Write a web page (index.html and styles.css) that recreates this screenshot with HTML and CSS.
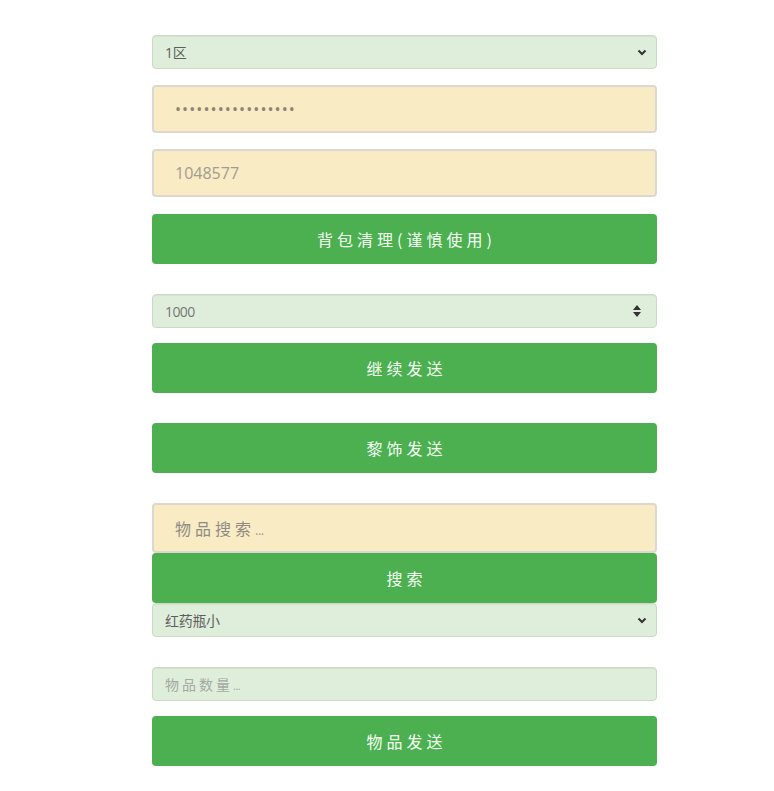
FILE: index.html
```html
<!DOCTYPE html>
<html lang="zh">
<head>
<meta charset="utf-8">
<title>工具</title>
<link rel="stylesheet" href="styles.css">
</head>
<body>
<div class="panel">
  <div class="field field-green sel gap16">
    <span class="sel-text">1区</span>
    <svg class="chev" width="10" height="8" viewBox="0 0 10 8"><path d="M1.5 2.5 L5 6 L8.5 2.5" fill="none" stroke="#333" stroke-width="2"/></svg>
  </div>
  <div class="field field-yellow gap16">
    <span class="pw">•••••••••••••••••</span>
  </div>
  <div class="field field-yellow gap17">
    <span class="ph-big">1048577</span>
  </div>
  <div class="btn gap30">背包清理(谨慎使用)</div>

  <div class="field field-green sel gap15">
    <span class="sel-text light">1000</span>
    <svg class="spin" width="10" height="14" viewBox="0 0 10 14"><path d="M5 1 L9 6 L1 6 Z M5 13 L9 8 L1 8 Z" fill="#333"/></svg>
  </div>
  <div class="btn gap30">继续发送</div>

  <div class="btn gap30">黎饰发送</div>

  <div class="field field-yellow search">
    <span class="ph-big spaced">物品搜索</span><span class="ph-big dots">...</span>
  </div>
  <div class="btn">搜索</div>
  <div class="field field-green sel gap30">
    <span class="sel-text">红药瓶小</span>
    <svg class="chev" width="10" height="8" viewBox="0 0 10 8"><path d="M1.5 2.5 L5 6 L8.5 2.5" fill="none" stroke="#333" stroke-width="2"/></svg>
  </div>

  <div class="field field-green gap15">
    <span class="ph-small">物品数量</span><span class="ph-small dots">...</span>
  </div>
  <div class="btn">物品发送</div>
</div>
</body>
</html>
```

FILE: styles.css
```css
html, body {
  margin: 0;
  padding: 0;
  background: #ffffff;
}
body {
  font-family: "Open Sans", "Noto Sans CJK SC", sans-serif;
}
.panel {
  width: 505px;
  margin-left: 152px;
  padding-top: 35px;
  display: flex;
  flex-direction: column;
}
.field {
  box-sizing: border-box;
  display: flex;
  align-items: center;
  border-radius: 4px;
}
.field-green {
  background: #dfeedb;
  border: 1px solid #c9dbc5;
  height: 34px;
  padding: 0 8px 0 12px;
  box-shadow: inset 0 1px 1px rgba(0,0,0,0.05);
}
.field-yellow {
  background: #f9ebc4;
  border: 2px solid #dcd8d0;
  height: 48px;
  padding: 0 21px;
}
.sel {
  justify-content: space-between;
}
.sel-text {
  font-size: 14px;
  color: #5e5e5e;
  font-family: "Open Sans", "Noto Sans CJK SC", sans-serif;
  letter-spacing: -0.3px;
}
.light {
  color: #777;
  letter-spacing: -0.6px;
}
.chev { margin-right: 1px; }
.spin { margin-right: 6px; }
.pw {
  font-size: 16px;
  color: #8a8574;
  letter-spacing: 1.1px;
}
.ph-big {
  font-size: 16px;
  color: #a09c92;
  font-family: "Open Sans", "Noto Sans CJK SC", sans-serif;
}
.spaced {
  letter-spacing: 4px;
  color: #8f8b83;
}
.dots {
  letter-spacing: -0.5px;
  font-size: 13px;
  margin-top: 3px;
}
.ph-small {
  font-size: 14px;
  color: #a3a9a0;
  letter-spacing: 3px;
}
.ph-small.dots {
  letter-spacing: -0.5px;
  font-size: 11px;
  margin-top: 3px;
}
.btn {
  box-sizing: border-box;
  height: 50px;
  background: #4caf50;
  color: #f4fff4;
  border-radius: 4px;
  display: flex;
  align-items: center;
  justify-content: center;
  font-size: 16px;
  letter-spacing: 4px;
  padding-left: 4px;
  font-family: "Noto Sans CJK SC", sans-serif;
}
.search { height: 50px; }
.gap15 { margin-bottom: 15px; }
.gap16 { margin-bottom: 16px; }
.gap17 { margin-bottom: 17px; }
.gap30 { margin-bottom: 30px; }
```
